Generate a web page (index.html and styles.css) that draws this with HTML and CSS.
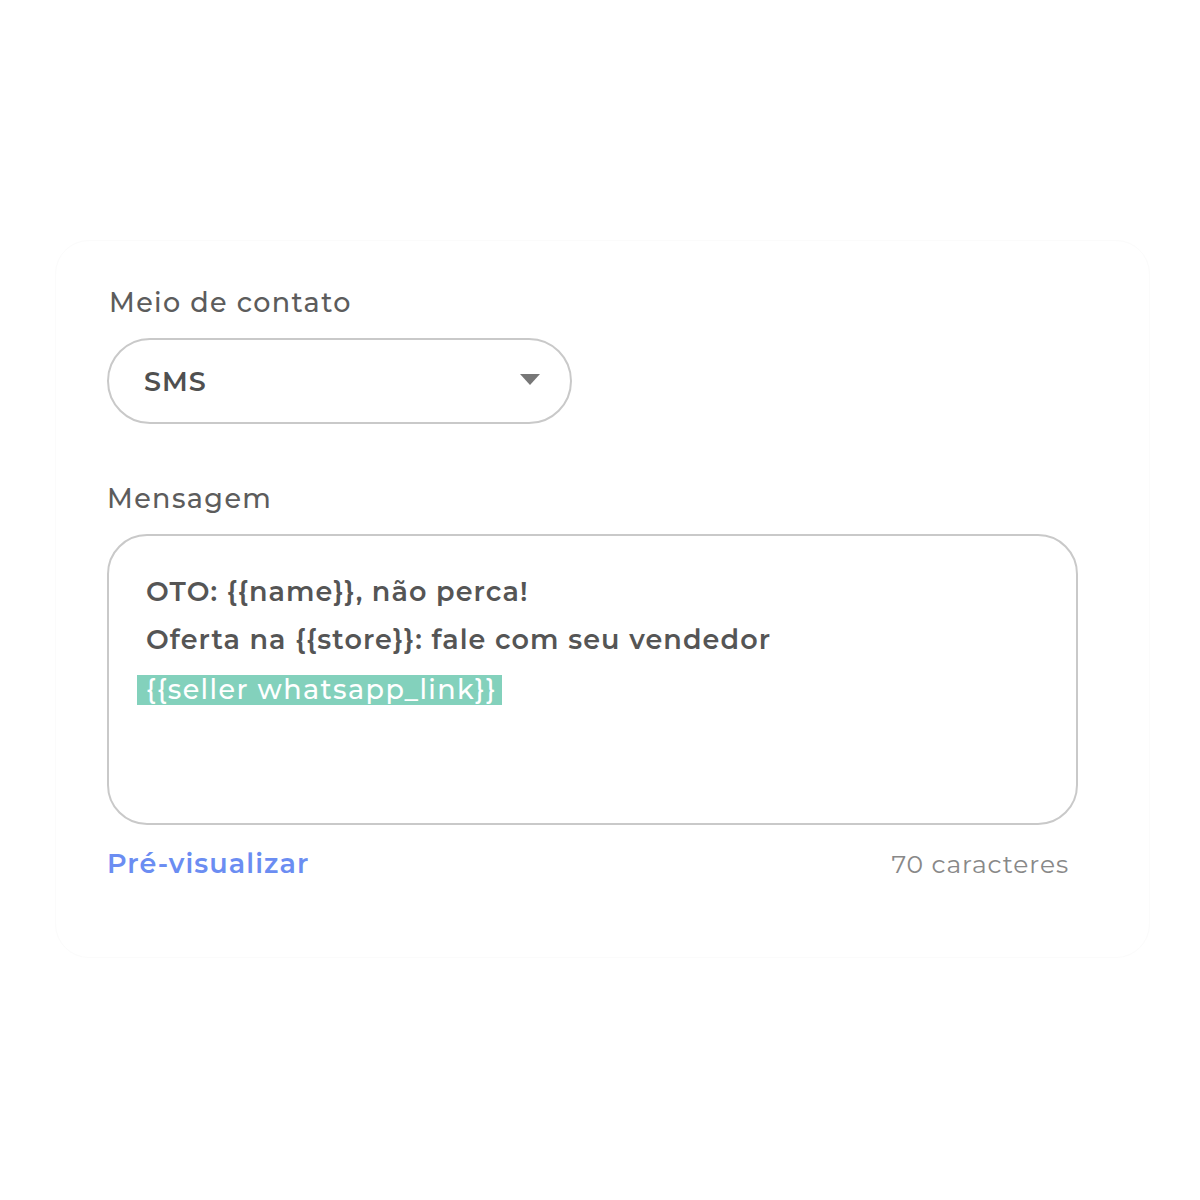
FILE: index.html
```html
<!DOCTYPE html>
<html lang="pt-BR">
<head>
<meta charset="utf-8">
<title>Mensagem</title>
<link rel="stylesheet" href="styles.css">
</head>
<body>
<div class="page">
  <div class="card">
    <div class="field">
      <div class="label label-first">Meio de contato</div>
      <div class="select">
        <span class="select-value">SMS</span>
        <svg class="caret" width="20" height="12" viewBox="0 0 20 12"><path d="M0 0 L20 0 L10 11 Z" fill="#777"/></svg>
      </div>
    </div>
    <div class="field field-msg">
      <div class="label">Mensagem</div>
      <div class="textarea">
        <div class="line">OTO: {{name}}, não perca!</div>
        <div class="line">Oferta na {{store}}: fale com seu vendedor</div>
        <div class="line"><span class="tag">{{seller whatsapp_link}}</span></div>
      </div>
      <div class="footer">
        <span class="preview">Pré-visualizar</span>
        <span class="count">70 caracteres</span>
      </div>
    </div>
  </div>
</div>
</body>
</html>
```

FILE: styles.css
```css
* { box-sizing: border-box; }
html, body { margin: 0; padding: 0; background: #ffffff; }
body {
  font-family: "Montserrat", Inter, "Open Sans", sans-serif;
  color: #555555;
}
.page {
  padding: 240px 50px 0 55px;
}
.card {
  width: 1095px;
  height: 718px;
  border: 1px solid #fbfbfb;
  border-radius: 34px;
  padding: 45px 0 0 51px;
}
.label {
  font-size: 27px;
  line-height: 34px;
  font-weight: 500;
  color: #5c5c5c;
  letter-spacing: 1.4px;
}
.label-first { padding-left: 2px; }
.select {
  margin-top: 18px;
  width: 465px;
  height: 86px;
  border: 2px solid #c9c9c9;
  border-radius: 43px;
  display: flex;
  align-items: center;
  justify-content: space-between;
  padding: 0 30px 0 35px;
}
.select-value {
  font-size: 27px;
  font-weight: 600;
  color: #505050;
  letter-spacing: 1px;
}
.caret { margin-top: -2px; }
.field-msg { margin-top: 58px; }
.textarea {
  margin-top: 18px;
  width: 971px;
  height: 291px;
  border: 2px solid #c9c9c9;
  border-radius: 40px;
  padding: 32px 30px 0 37px;
}
.line {
  font-size: 27px;
  line-height: 48px;
  font-weight: 600;
  color: #555555;
  letter-spacing: 1.1px;
}
.tag {
  display: inline-block;
  background: #83d1bc;
  color: #ffffff;
  font-weight: 500;
  height: 30px;
  line-height: 30px;
  margin: 11px 0 0 -9px;
  padding: 0 5px 0 9px;
  vertical-align: top;
  letter-spacing: 1.4px;
}
.footer {
  width: 971px;
  margin-top: 22px;
  display: flex;
  justify-content: space-between;
  align-items: baseline;
  padding-right: 9px;
}
.preview {
  font-size: 27px;
  line-height: 34px;
  font-weight: 600;
  color: #6b8df2;
  letter-spacing: 1.1px;
}
.count {
  font-size: 25px;
  font-weight: 400;
  color: #888888;
  letter-spacing: 0.9px;
}
```
